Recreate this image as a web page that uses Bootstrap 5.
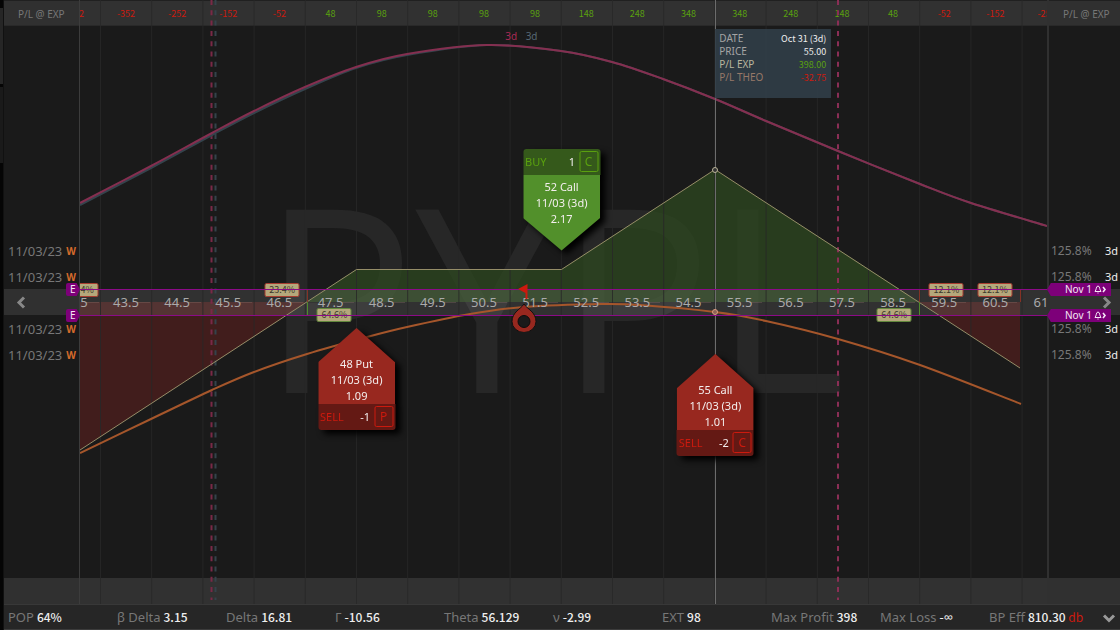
<!DOCTYPE html>
<html lang="en">
<head>
<meta charset="utf-8">
<meta name="viewport" content="width=device-width, initial-scale=1">
<title>PYPL curve analysis</title>
<link href="https://cdn.jsdelivr.net/npm/bootstrap@5.3.0/dist/css/bootstrap.min.css" rel="stylesheet">
<style>
  :root { --ink: #1a1a1a; --band: #303030; --muted: #777; --gain: #5aa00f; --loss: #cc1a0e; --event: #7d0079; --row: 26px; }
  body { background: var(--ink); color: #eee; font-family: "Noto Sans", "Open Sans", sans-serif; font-size: 13px; line-height: 16px; }
  .num { font-family: "Noto Sans CJK SC", "Noto Sans", sans-serif; }
  .gain { color: var(--gain); } .loss { color: var(--loss); } .dim { color: var(--muted); }
  .edge { width: 4px; background: #050505; border-right: 1px solid #111; }
  .edge div:nth-child(1) { height: 76px; margin-top: 8px; background: #262626; }
  .edge div:nth-child(2) { height: 76px; margin-top: 3px; background: var(--ink); }
  .shell { min-width: 0; }

  .band { height: var(--row); flex: none; background: var(--band); }
  .rail-l { width: 76px; border-right: 1px solid #3c3c3c; }
  .rail-r { width: 73px; border-left: 2px solid #303030; }
  .rail-title { font-size: 10px; padding: 2px 0 0 14px; white-space: nowrap; }
  .topband { border-top: 1px solid #202020; border-bottom: 1px solid #292929; }
  .line { height: var(--row); flex: none; padding: 1px 3px 0 4px; }
  .rail-r .line { padding: 1px 2px 0 2px; }
  .weekly { color: #d56a2b; font-size: 10px; font-weight: 700; }
  .vol { font-size: 12px; } .dte { font-size: 11px; }
  .arrow { border: 0; background: none; padding: 0; line-height: 0; }

  .event { position: absolute; height: 13px; background: var(--event); color: #f5e6f5; font-size: 10px; line-height: 13px; }
  .event.up { top: -6px; } .event.down { top: 20px; }
  .event.e { right: -1px; width: 14px; padding-left: 4px; border-radius: 2px; clip-path: polygon(0 0, 76% 0, 100% 50%, 76% 100%, 0 100%); }
  .event.n { left: -2px; right: 9px; padding: 0 4px 0 18px; clip-path: polygon(0 50%, 6% 0, 100% 0, 100% 100%, 6% 100%); }

  .plot { min-width: 0; }
  .layer { position: absolute; inset: 0; width: 100%; height: 100%; pointer-events: none; }
  .symbol { font-size: 256px; line-height: 256px; font-family: "Open Sans", "Noto Sans", sans-serif; color: #272727; padding: 0 20px 16px 0; }
  .ruler { display: flex; height: var(--row); flex: none; margin: 0 -2.6% 0 -3.18%; position: relative; background: rgba(255,255,255,.1); }
  .ruler span { flex: 1 1 0; text-align: center; line-height: 26px; }
  .pl { font-size: 9px; }
  .axis { color: #aaa; }
  .bounds { position: absolute; left: 0; right: 0; top: calc(50% - 13px); height: 27px; border-top: 1px solid #8c0a88; border-bottom: 1px solid #8c0a88; }

  .pin { position: absolute; transform: translate(-50%, -50%); }
  .odds { width: 35px; height: 14px; background: #b5a87b; border: 1px solid #a83c30; border-radius: 2px; color: #3c392c; font-size: 9px; line-height: 12px; text-align: center; }
  .odds.win { border-color: #62883c; }
  .odds.up { top: 48%; } .odds.down { top: 52.2%; }
  .span-mark { font-size: 10px; top: 5.96%; }

  .leg { position: absolute; width: 77px; transform: translateX(-50%); filter: drop-shadow(5px 4px 3px #000); text-align: center; font-size: 11px; line-height: 16px; border: 0; padding: 0; background: none; color: #f3eeee; }
  .leg .tip { height: 76px; display: flex; flex-direction: column; justify-content: center; }
  .leg .order { height: 26px; padding: 0 2px; }
  .leg .kind { width: 19px; height: 21px; font-size: 12px; line-height: 19px; border: 1px solid; border-radius: 2px; }
  .leg.buy .tip { background: #52902b; padding-bottom: 20px; clip-path: polygon(0 0, 100% 0, 100% 57%, 50% 100%, 0 57%); }
  .leg.buy .order { background: #35591b; border-radius: 3px 3px 0 0; }
  .leg.sell .tip { background: #98281f; padding-top: 28px; clip-path: polygon(50% 0, 100% 45%, 100% 100%, 0 100%, 0 45%); }
  .leg.sell .order { background: #641914; border-radius: 0 0 3px 3px; }
  .at48 { left: 28.6%; top: 54.3%; } .at52 { left: 49.8%; top: 24.6%; } .at55 { left: 65.7%; top: 58.6%; }

  .spot { left: 45.91%; top: 50.6%; width: 28px; height: 52px; }
  .node { width: 6px; height: 6px; border: 1px solid #bbb59a; border-radius: 50%; left: 65.7%; background: #333; }
  .node.peak { top: 28.1%; } .node.theo { top: 51.7%; border-color: #dc9a80; background: #8b6456; }

  .readout { position: absolute; left: 65.7%; top: 29px; width: 116px; height: 69px; padding: 3px 5px 3px 4px; background: rgba(49,62,72,.9); font-size: 10px; line-height: 13px; }
  .readout .num { font-size: 9px; }
  .readout dt { font-weight: 400; color: #a4a4a4; }
  .readout .exp { color: #b9b69f; } .readout .theory { color: #967868; }

  .stats { height: var(--row); flex: none; background: #262626; border-top: 1px solid #383838; border-bottom: 1px solid #3c3c3c; padding: 0 22px 0 4px; }
  .stats dl { display: grid; grid-template-columns: repeat(10, minmax(0, 1fr)); }
  .stats dt { font-weight: 400; color: var(--muted); margin-right: 3px; }
  .stats .num { font-size: 12px; font-weight: 500; }
  .stats .arrow { position: absolute; right: 4px; top: 9px; }
</style>
</head>
<body class="vh-100 overflow-hidden d-flex">
<div class="edge flex-shrink-0"><div></div><div></div></div>
<div class="shell flex-fill d-flex flex-column">
  <main class="flex-fill d-flex">
    <aside class="rail-l flex-shrink-0 d-flex flex-column">
      <div class="band topband rail-title dim d-flex align-items-center">P/L @ EXP</div>
      <div class="flex-fill d-flex flex-column justify-content-center dim">
        <div class="line d-flex align-items-center justify-content-between"><span>11/03/23</span><span class="weekly">W</span></div>
        <div class="line d-flex align-items-center justify-content-between"><span>11/03/23</span><span class="weekly">W</span></div>
        <div class="band position-relative d-flex align-items-center ps-2">
          <button class="arrow ms-1" aria-label="Earlier prices"><svg width="10" height="13" viewBox="0 0 10 13"><path d="M8 1.500 3 6.500l5 5" fill="none" stroke="#888" stroke-width="3"/></svg></button>
          <span class="event e up">E</span><span class="event e down">E</span>
        </div>
        <div class="line d-flex align-items-center justify-content-between"><span>11/03/23</span><span class="weekly">W</span></div>
        <div class="line d-flex align-items-center justify-content-between"><span>11/03/23</span><span class="weekly">W</span></div>
      </div>
      <div class="band"></div>
    </aside>

    <section class="plot flex-fill position-relative overflow-hidden d-flex flex-column">
      <div class="layer symbol d-flex align-items-center justify-content-center">PYPL</div>
      <svg class="layer" viewBox="80 0 967 604" preserveAspectRatio="none">
        <path d="M307 302 356.500 269H561.500L715 169.500 919.500 302Z" fill="#2e4a20" fill-opacity=".72"/>
        <path d="M80 302H307L80 450ZM919.500 302H1020V368Z" fill="#4a1f1d" fill-opacity=".82"/>
      </svg>
      <div class="ruler topband pl num" id="pl"></div>
      <div class="flex-fill"></div>
      <div class="ruler"></div>
      <div class="flex-fill"></div>
      <div class="ruler"></div>

      <svg class="layer" viewBox="80 0 967 604" preserveAspectRatio="none" fill="none">
        <path id="grid" stroke="#282828" stroke-opacity=".85"/>
        <path d="M80 302.500H1020" stroke="#8a7068" stroke-opacity=".35" stroke-dasharray="13 38" stroke-dashoffset="45"/>
        <path d="M211.500 0V600" stroke="#7a2947" stroke-width="2" stroke-dasharray="5 5.300"/>
        <path d="M215.500 0V600" stroke="#34434b" stroke-width="2" stroke-dasharray="5 5.300"/>
        <path d="M838 0V600" stroke="#8a2e55" stroke-width="2" stroke-dasharray="5 5.300"/>
        <path d="M80 450 356.500 269.500H561.500L715 169.500 1020 368" stroke="#958d68"/>
        <path id="ghost" stroke="#34444d" stroke-width="2"/>
        <path id="later" stroke="#852f50" stroke-width="2"/>
        <path id="theo" stroke="#a5562b" stroke-width="2"/>
        <path d="M307.500 290V302M919.500 290V302M1020.500 290V302" stroke="#843226"/>
        <path d="M307.500 302V315M919.500 302V315" stroke="#4f8a2c"/>
        <path d="M715.500 0V604" stroke="#6c6c6c"/>
      </svg>
      <div class="layer d-flex align-items-center"><div class="ruler axis flex-fill bg-transparent" id="axis"></div></div>

      <span class="pin span-mark" style="left:44.6%;color:#a82a56">3d</span>
      <span class="pin span-mark" style="left:46.7%;color:#566874">3d</span>

      <span class="pin odds up num" style="left:0.1%">23.4%</span>
      <span class="pin odds up num" style="left:20.9%">23.4%</span>
      <span class="pin odds win down num" style="left:26.3%">64.6%</span>
      <span class="pin odds win down num" style="left:84.2%">64.6%</span>
      <span class="pin odds up num" style="left:89.6%">12.1%</span>
      <span class="pin odds up num" style="left:94.6%">12.1%</span>
      <div class="bounds"></div>

      <span class="pin node peak"></span><span class="pin node theo"></span>
      <svg class="pin spot" viewBox="0 0 28 52">
        <path d="M8 9 17.500 4v15h-2V13Z" fill="#cc1a0e"/>
        <path d="M14 24C17 29 26 32 26 41.500A12 11 0 0 1 2 41.500C2 32 11 29 14 24Z" fill="#98281f" stroke="#111"/>
        <circle cx="14" cy="41.500" r="6" fill="#1a1a1a" stroke="#0d0d0d"/>
      </svg>

      <button class="leg buy at52">
        <span class="order d-flex align-items-center justify-content-between"><span class="gain">BUY</span><span class="ms-auto me-1">1</span><span class="kind gain">C</span></span>
        <span class="tip"><span>52 Call</span><span>11/03 (3d)</span><span>2.17</span></span>
      </button>
      <button class="leg sell at48">
        <span class="tip"><span>48 Put</span><span>11/03 (3d)</span><span>1.09</span></span>
        <span class="order d-flex align-items-center justify-content-between"><span class="loss">SELL</span><span class="ms-auto me-1">-1</span><span class="kind loss">P</span></span>
      </button>
      <button class="leg sell at55">
        <span class="tip"><span>55 Call</span><span>11/03 (3d)</span><span>1.01</span></span>
        <span class="order d-flex align-items-center justify-content-between"><span class="loss">SELL</span><span class="ms-auto me-1">-2</span><span class="kind loss">C</span></span>
      </button>

      <dl class="readout mb-0">
        <div class="d-flex justify-content-between"><dt>DATE</dt><dd class="num mb-0">Oct 31 (3d)</dd></div>
        <div class="d-flex justify-content-between"><dt>PRICE</dt><dd class="num mb-0">55.00</dd></div>
        <div class="d-flex justify-content-between"><dt class="exp">P/L EXP</dt><dd class="num gain mb-0">398.00</dd></div>
        <div class="d-flex justify-content-between"><dt class="theory">P/L THEO</dt><dd class="num loss mb-0">-32.75</dd></div>
      </dl>
    </section>

    <aside class="rail-r flex-shrink-0 d-flex flex-column">
      <div class="band topband rail-title dim d-flex align-items-center">P/L @ EXP</div>
      <div class="flex-fill d-flex flex-column justify-content-center">
        <div class="line d-flex align-items-center justify-content-between"><span class="vol dim">125.8%</span><span class="dte">3d</span></div>
        <div class="line d-flex align-items-center justify-content-between"><span class="vol dim">125.8%</span><span class="dte">3d</span></div>
        <div class="band position-relative d-flex align-items-center justify-content-end pe-2">
          <button class="arrow" aria-label="Later prices"><svg width="10" height="13" viewBox="0 0 10 13"><path d="m2 1.500 5 5-5 5" fill="none" stroke="#888" stroke-width="3"/></svg></button>
          <span class="event n up d-flex align-items-center justify-content-between">Nov 1 <svg width="13" height="9" viewBox="0 0 13 9" fill="none" stroke="#f5e6f5"><path d="M1 6.500C2.500 5 2 1 4 1s1.500 4 3 5.500ZM3.500 8h1" /><path d="m9 2 2 2.500L9 7" stroke-width="1.600"/></svg></span>
          <span class="event n down d-flex align-items-center justify-content-between">Nov 1 <svg width="13" height="9" viewBox="0 0 13 9" fill="none" stroke="#f5e6f5"><path d="M1 6.500C2.500 5 2 1 4 1s1.500 4 3 5.500ZM3.500 8h1" /><path d="m9 2 2 2.500L9 7" stroke-width="1.600"/></svg></span>
        </div>
        <div class="line d-flex align-items-center justify-content-between"><span class="vol dim">125.8%</span><span class="dte">3d</span></div>
        <div class="line d-flex align-items-center justify-content-between"><span class="vol dim">125.8%</span><span class="dte">3d</span></div>
      </div>
      <div class="band"></div>
    </aside>
  </main>

  <footer class="stats position-relative">
    <dl class="mb-0 h-100 align-items-center text-nowrap">
      <div class="d-flex align-items-center"><dt>POP</dt><dd class="num mb-0">64%</dd></div>
      <div class="d-flex align-items-center"><dt>β Delta</dt><dd class="num mb-0">3.15</dd></div>
      <div class="d-flex align-items-center"><dt>Delta</dt><dd class="num mb-0">16.81</dd></div>
      <div class="d-flex align-items-center"><dt>Γ</dt><dd class="num mb-0">-10.56</dd></div>
      <div class="d-flex align-items-center"><dt>Theta</dt><dd class="num mb-0">56.129</dd></div>
      <div class="d-flex align-items-center"><dt>ν</dt><dd class="num mb-0">-2.99</dd></div>
      <div class="d-flex align-items-center"><dt>EXT</dt><dd class="num mb-0">98</dd></div>
      <div class="d-flex align-items-center"><dt>Max Profit</dt><dd class="num mb-0">398</dd></div>
      <div class="d-flex align-items-center"><dt>Max Loss</dt><dd class="mb-0">-∞</dd></div>
      <div class="d-flex align-items-center"><dt>BP Eff</dt><dd class="num mb-0">810.30 <span class="loss fw-normal">db</span></dd></div>
    </dl>
    <button class="arrow" aria-label="More figures"><svg width="14" height="9" viewBox="0 0 14 9"><path d="m2 1.500 5 5 5-5" fill="none" stroke="#999" stroke-width="3"/></svg></button>
  </footer>
</div>
<script src="https://cdn.jsdelivr.net/npm/bootstrap@5.3.0/dist/js/bootstrap.bundle.min.js"></script>
<script>
  // One ruler cell per strike interval; the outer two run past the plot's edges.
  const profit = [-452, -352, -252, -152, -52, 48, 98, 98, 98, 98, 148, 248, 348, 348, 248, 148, 48, -52, -152, -252];
  const byId = id => document.getElementById(id);
  byId('pl').innerHTML = profit.map(v => `<span class="${v < 0 ? 'loss' : 'gain'}">${v}</span>`).join('');
  byId('axis').innerHTML = profit.map((v, i) => `<span>${(42.5 + i).toFixed(1)}</span>`).join('');
  byId('grid').setAttribute('d', profit.slice(1).map((v, i) => `M${100.5 + i * 51.2} 0V604`).join(''));

  // Smooth curve through the points (Catmull-Rom to cubic Bezier).
  function curve(p) {
    let d = `M${p[0]}`;
    for (let i = 0; i < p.length - 1; i++) {
      const a = p[i - 1] || p[i], b = p[i], c = p[i + 1], e = p[i + 2] || c;
      d += `C${b[0] + (c[0] - a[0]) / 6} ${b[1] + (c[1] - a[1]) / 6} ${c[0] - (e[0] - b[0]) / 6} ${c[1] - (e[1] - b[1]) / 6} ${c}`;
    }
    return d;
  }
  const later = [[80, 203], [151, 166], [212, 133], [254, 111], [305, 87], [356, 67], [407, 54], [487, 45], [561, 51], [612, 62], [663, 79], [715, 99], [766, 121], [838, 151], [920, 184], [971, 203], [1047, 226]];
  byId('later').setAttribute('d', curve(later));
  byId('ghost').setAttribute('d', curve(later.map(([x, y]) => [x, x < 340 ? y + 2 : x < 480 ? y + 1 : y])));
  byId('theo').setAttribute('d', curve([[80, 453], [151, 419], [212, 390], [254, 372], [307, 354], [367, 337], [407, 327], [470, 314], [524, 307], [602, 304], [640, 305], [715, 312], [766, 321], [838, 339], [920, 365], [1021, 404]]));
</script>
</body>
</html>
